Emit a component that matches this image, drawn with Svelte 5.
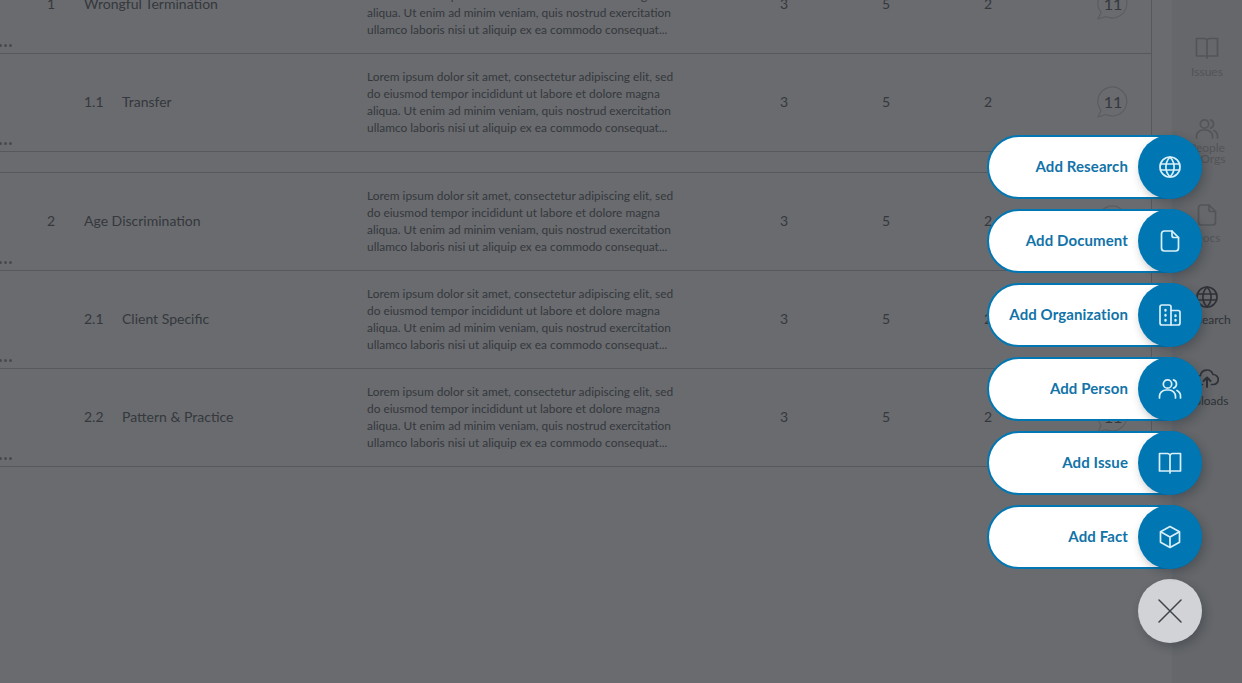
<script>
  const lorem = [
    'Lorem ipsum dolor sit amet, consectetur adipiscing elit, sed',
    'do eiusmod tempor incididunt ut labore et dolore magna',
    'aliqua. Ut enim ad minim veniam, quis nostrud exercitation',
    'ullamco laboris nisi ut aliquip ex ea commodo consequat...'
  ];

  const groups = [
    [
      { num: '1', title: 'Wrongful Termination' },
      { num: '1.1', title: 'Transfer', sub: true }
    ],
    [
      { num: '2', title: 'Age Discrimination' },
      { num: '2.1', title: 'Client Specific', sub: true },
      { num: '2.2', title: 'Pattern & Practice', sub: true }
    ]
  ];

  const actions = [
    { label: 'Add Research', icon: 'globe' },
    { label: 'Add Document', icon: 'doc' },
    { label: 'Add Organization', icon: 'org' },
    { label: 'Add Person', icon: 'people' },
    { label: 'Add Issue', icon: 'book' },
    { label: 'Add Fact', icon: 'cube' }
  ];

  const sideItems = [
    { label: 'Issues', icon: 'book', faded: true },
    { label: 'People\n& Orgs', icon: 'people', faded: true, tall: true },
    { label: 'Docs', icon: 'doc', faded: true },
    { label: 'Research', icon: 'globe' },
    { label: 'Uploads', icon: 'cloud' }
  ];
</script>

{#snippet icon(name)}
  <svg viewBox="0 0 24 24" fill="none" stroke="currentColor" stroke-width="1.7" stroke-linecap="round" stroke-linejoin="round">
    {#if name === 'globe'}
      <circle cx="12" cy="12" r="10" />
      <path d="M2.500 9h19M2.500 15h19" />
      <path d="M12 2c-5.500 6-5.500 14 0 20M12 2c5.500 6 5.500 14 0 20" />
    {:else if name === 'doc'}
      <path d="M14 2H6.500a3 3 0 0 0-3 3v14a3 3 0 0 0 3 3h11a3 3 0 0 0 3-3V8.500z" />
      <path d="M14 2v4.500a2 2 0 0 0 2 2h4.500" />
    {:else if name === 'org'}
      <path d="M2 4a2 2 0 0 1 2-2h7a2 2 0 0 1 2 2v18H4a2 2 0 0 1-2-2z" />
      <path d="M13 7.500h7a2 2 0 0 1 2 2V20a2 2 0 0 1-2 2h-7" />
      <path d="M7.500 7v.500M7.500 12v.500M7.500 17v.500M17.500 12.500v.500M17.500 17v.500" stroke-width="2.400" />
    {:else if name === 'people'}
      <circle cx="9.500" cy="7" r="4.200" />
      <path d="M1.500 21v-1.500A6.500 6.500 0 0 1 8 13h3a6.500 6.500 0 0 1 6.500 6.500V21" />
      <path d="M15.500 2.900a4.300 4.300 0 0 1 0 8.200M19 13.500a6.500 6.500 0 0 1 3.500 6V21" />
    {:else if name === 'book'}
      <path d="M12 5V20H1.500V2.500H9.500A2.500 2.500 0 0 1 12 5zM12 5A2.500 2.500 0 0 1 14.500 2.500H22.500V20H12M12 20V22" />
    {:else if name === 'cube'}
      <path d="M12 1.500l9.500 5.200v10.600L12 22.500l-9.500-5.200V6.700z" />
      <path d="M3 7l9 5 9-5M12 12v10" />
    {:else if name === 'cloud'}
      <path d="M7.500 18.500H6a4.500 4.500 0 0 1-.6-8.960A6.500 6.500 0 0 1 18 8.500a4.500 4.500 0 0 1 .5 10h-2" />
      <path d="M12 21v-9M8.500 15l3.500-3.500 3.500 3.500" stroke-width="2" />
    {/if}
  </svg>
{/snippet}

<div class="page">
  <main class="table">
    {#each groups as group}
      <section class="group">
        {#each group as row}
          <div class="row">
            <div class="num">{row.sub ? '' : row.num}</div>
            <div class="title">
              {#if row.sub}<span class="subnum">{row.num}</span>{/if}{row.title}
            </div>
            <div class="desc">
              {#each lorem as line}<div>{line}</div>{/each}
            </div>
            <div class="count">3</div>
            <div class="count">5</div>
            <div class="count">2</div>
            <div class="bubble">
              <svg viewBox="0 0 32 32" fill="none" stroke="currentColor" stroke-width="1.300" stroke-linejoin="round">
                <path d="M1 31l3-6.500A14.500 14.500 0 1 1 9 28.500z" />
              </svg>
              <span>11</span>
            </div>
            <div class="more"><i></i><i></i><i></i></div>
          </div>
        {/each}
      </section>
    {/each}
  </main>

  <aside class="sidebar">
    {#each sideItems as item}
      <div class="side-item" class:faded={item.faded} class:tall={item.tall}>
        <div class="side-icon">{@render icon(item.icon)}</div>
        <div class="side-label">{item.label}</div>
      </div>
    {/each}
  </aside>
</div>

<div class="overlay"></div>

<div class="fab">
  {#each actions as action}
    <button class="action">
      <span class="action-label">{action.label}</span>
      <span class="action-icon">{@render icon(action.icon)}</span>
    </button>
  {/each}
  <button class="close" aria-label="Close">
    <svg viewBox="0 0 24 24" fill="none" stroke="currentColor" stroke-width="1.500" stroke-linecap="round">
      <path d="M1 1l22 22M23 1L1 23" />
    </svg>
  </button>
</div>

<style>
  :global(body) {
    margin: 0;
    height: 683px;
    overflow: hidden;
    font-family: Lato, "Open Sans", sans-serif;
    background: #fff;
  }

  .page {
    display: flex;
    height: 683px;
    overflow: hidden;
  }

  .table {
    width: 1151px;
    flex: none;
    margin-top: -44px;
    align-self: flex-start;
    border-right: 1px solid #c3c4c7;
  }

  .group + .group {
    margin-top: 20px;
    border-top: 1px solid #c3c4c7;
  }

  .row {
    position: relative;
    display: grid;
    grid-template-columns: 84px 283px 366px 102px 102px 102px 1fr;
    align-items: center;
    height: 95px;
    padding-bottom: 2px;
    border-bottom: 1px solid #c3c4c7;
    color: #62656c;
    font-size: 14px;
  }

  .num {
    text-align: center;
    padding-left: 18px;
  }

  .subnum {
    display: inline-block;
    width: 38px;
  }

  .desc {
    font-size: 11.900px;
    line-height: 17px;
    white-space: nowrap;
  }

  .count {
    text-align: center;
  }

  .bubble {
    position: relative;
    width: 32px;
    height: 32px;
    margin-left: 58px;
    display: flex;
    align-items: center;
    justify-content: center;
    font-size: 16px;
  }

  .bubble svg {
    position: absolute;
    inset: 0;
    color: #d2d3d5;
  }

  .more {
    position: absolute;
    left: 0;
    bottom: 6px;
    display: flex;
    gap: 2px;
    margin-left: -1px;
  }

  .more i {
    width: 3px;
    height: 3px;
    border-radius: 50%;
    background: #96989d;
  }

  .sidebar {
    margin-left: 20px;
    flex: 1;
    background: #f1f1f2;
    padding-top: 36px;
    display: flex;
    flex-direction: column;
    align-items: center;
    overflow: hidden;
  }

  .side-item {
    height: 81px;
    display: flex;
    flex-direction: column;
    align-items: center;
    color: #4e5159;
    font-size: 12px;
    text-align: center;
    white-space: pre-line;
    line-height: 12px;
  }

  .side-item:nth-child(3) {
    height: 82px;
  }

  .side-item.tall {
    height: 86px;
    line-height: 11px;
  }

  .side-item.tall .side-icon {
    margin-bottom: 1px;
  }

  .side-item.faded {
    color: #b8babd;
  }

  .side-icon {
    width: 24px;
    height: 24px;
    margin-bottom: 5px;
  }

  .side-item:first-child .side-icon {
    margin-bottom: 6px;
  }

  .side-icon svg {
    display: block;
  }

  .overlay {
    position: fixed;
    inset: 0;
    background: rgba(32, 34, 39, 0.67);
  }

  .fab {
    position: fixed;
    right: 40px;
    bottom: 40px;
    display: flex;
    flex-direction: column;
    align-items: flex-end;
    gap: 10px;
  }

  button {
    font: inherit;
    padding: 0;
    cursor: pointer;
  }

  .action {
    position: relative;
    display: flex;
    align-items: center;
    justify-content: flex-end;
    width: 215px;
    height: 64px;
    box-sizing: border-box;
    background: #fff;
    border: 2px solid #0077b3;
    border-radius: 32px;
    padding-right: 72px;
  }

  .action-label {
    color: #1273a8;
    font-size: 15px;
    font-weight: 700;
    letter-spacing: 0.100px;
    white-space: nowrap;
    padding-bottom: 2px;
  }

  .action-icon {
    position: absolute;
    right: -2px;
    top: -2px;
    width: 64px;
    height: 64px;
    border-radius: 50%;
    background: #0077b3;
    color: #d9eff9;
    display: flex;
    align-items: center;
    justify-content: center;
    box-shadow: 3px 4px 10px rgba(30, 40, 50, 0.32);
  }

  .action-icon svg {
    width: 24px;
    height: 24px;
  }

  .close {
    width: 64px;
    height: 64px;
    border: none;
    border-radius: 50%;
    background: #d2d3d7;
    color: #3f434b;
    display: flex;
    align-items: center;
    justify-content: center;
    box-shadow: 3px 4px 10px rgba(30, 40, 50, 0.32);
  }

  .close svg {
    width: 24px;
    height: 24px;
  }
</style>
